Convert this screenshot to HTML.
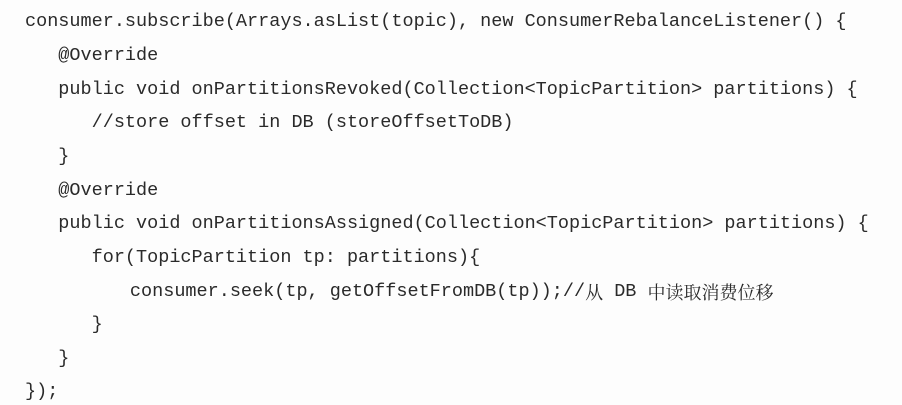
<!DOCTYPE html>
<html><head><meta charset="utf-8"><style>
html,body{margin:0;padding:0;background:#fff;}
body{width:902px;height:405px;position:relative;overflow:hidden;background:#fdfdfd;}
.l{position:absolute;left:25px;height:20px;white-space:pre;font-family:"Liberation Mono","Noto Sans CJK SC",monospace;font-size:18.5px;color:#2a2a2a;line-height:20px;}
.c{font-family:"Noto Serif CJK SC","Liberation Serif",serif;font-size:18px;line-height:20px;display:inline-block;vertical-align:top;height:20px;}
</style></head><body>
<div class="l" style="top:12px">consumer.subscribe(Arrays.asList(topic), new ConsumerRebalanceListener() {</div>
<div class="l" style="top:46px">   @Override</div>
<div class="l" style="top:80px">   public void onPartitionsRevoked(Collection&lt;TopicPartition&gt; partitions) {</div>
<div class="l" style="top:113px">      //store offset in DB (storeOffsetToDB)</div>
<div class="l" style="top:147px">   }</div>
<div class="l" style="top:181px">   @Override</div>
<div class="l" style="top:214px">   public void onPartitionsAssigned(Collection&lt;TopicPartition&gt; partitions) {</div>
<div class="l" style="top:248px">      for(TopicPartition tp: partitions){</div>
<div class="l" style="top:282px;left:30px">         consumer.seek(tp, getOffsetFromDB(tp));//<span class="c">从</span> DB <span class="c">中读取消费位移</span></div>
<div class="l" style="top:315px">      }</div>
<div class="l" style="top:349px">   }</div>
<div class="l" style="top:382px">});</div>
</body></html>
